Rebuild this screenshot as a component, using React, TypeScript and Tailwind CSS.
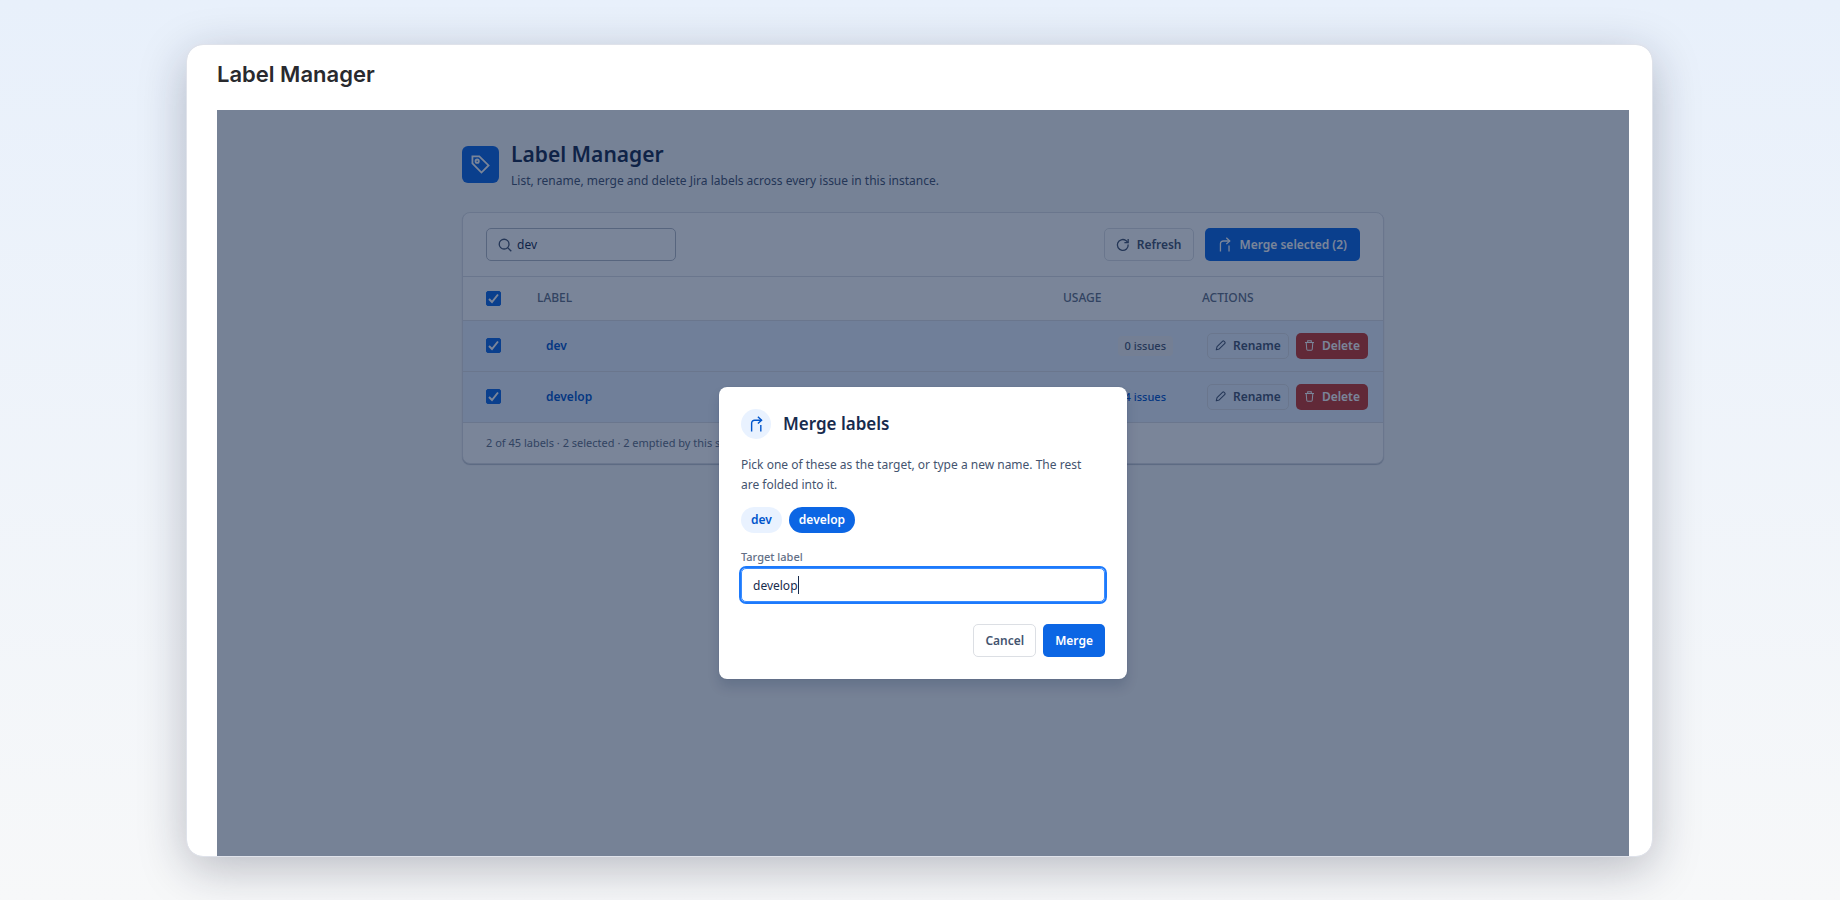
import { useEffect, useRef, useState } from 'react'
import type { ReactNode } from 'react'
import clsx from 'clsx'

interface Label {
  id: string
  name: string
  usage: number
}

const labels: Label[] = [
  { id: '1', name: 'dev', usage: 0 },
  { id: '2', name: 'develop', usage: 4 },
]

function Icon({ size = 14, className, children }: { size?: number; className?: string; children: ReactNode }) {
  return (
    <svg
      width={size}
      height={size}
      viewBox="0 0 16 16"
      fill="none"
      stroke="currentColor"
      strokeWidth="1.5"
      className={clsx('shrink-0', className)}
      aria-hidden="true"
    >
      {children}
    </svg>
  )
}

function TagIcon() {
  return (
    <Icon size={19}>
      <path d="M1.2 1.2h5.8l7.8 7.6-6 6-7.6-7.8z" />
      <circle cx="5.2" cy="5.2" r="1.4" />
    </Icon>
  )
}

function SearchIcon() {
  return (
    <Icon>
      <circle cx="7" cy="7" r="5.6" />
      <path d="m11 11 4.2 4.2" />
    </Icon>
  )
}

function RefreshIcon() {
  return (
    <Icon>
      <path d="M13.9 7.4a6.2 6.2 0 1 1-2.6-4.5L13.6 5" />
      <path d="M13.9 1v4.3H9.6" />
    </Icon>
  )
}

function MergeIcon({ size = 14 }: { size?: number }) {
  return (
    <Icon size={size} className="overflow-visible">
      <path d="M2.8 15.5V6.6A3.2 3.2 0 0 1 6 3.4h7.4" />
      <path d="M9.5-.2 13.4 3.4 9.5 7" />
      <path d="M12.6 8.5v7" />
    </Icon>
  )
}

function EditIcon() {
  return (
    <Icon size={11}>
      <path d="m1.8 14.2 1.2-4.4 8.2-8.2a1.2 1.2 0 0 1 1.7 0l1.5 1.5a1.2 1.2 0 0 1 0 1.7L6.2 13z" strokeLinejoin="round" />
    </Icon>
  )
}

function TrashIcon() {
  return (
    <Icon size={11}>
      <path d="M1.5 3.5h13M5.4 3.2v-2h5.2v2M3.2 3.8l.8 9.6c.1.9.6 1.4 1.4 1.4h5.2c.8 0 1.3-.5 1.4-1.4l.8-9.6" />
    </Icon>
  )
}

function Checkbox({ label, checked, onChange }: { label: string; checked: boolean; onChange: () => void }) {
  return (
    <span className="relative flex size-[15px]">
      <input
        type="checkbox"
        aria-label={label}
        checked={checked}
        onChange={onChange}
        className="size-full appearance-none rounded-xs border border-[#8590a2] bg-white checked:border-[#0c66e4] checked:bg-[#0c66e4]"
      />
      {checked && (
        <svg viewBox="0 0 15 15" className="pointer-events-none absolute inset-0 text-white" fill="none" stroke="currentColor" strokeWidth="2">
          <path d="m3 8 3 3 6-7.5" />
        </svg>
      )}
    </span>
  )
}

export default function App() {
  const [search, setSearch] = useState('dev')
  const [selected, setSelected] = useState<string[]>(['1', '2'])
  const [target, setTarget] = useState('develop')
  const inputRef = useRef<HTMLInputElement>(null)

  useEffect(() => {
    inputRef.current?.focus()
    inputRef.current?.setSelectionRange(target.length, target.length)
  }, [])

  const toggle = (id: string) =>
    setSelected((prev) => (prev.includes(id) ? prev.filter((x) => x !== id) : [...prev, id]))

  const toggleAll = () => setSelected(selected.length === labels.length ? [] : labels.map((l) => l.id))

  return (
    <div className="flex min-h-screen flex-col bg-linear-to-b from-[#e8f0fb] to-[#f7f8f9] pt-[45px] pr-[188px] pb-11 pl-[187px]">
      <div className="flex grow flex-col overflow-hidden rounded-[16px] bg-white pr-[23px] pl-[30px] shadow-[0_12px_48px_rgba(20,24,50,0.28)] outline outline-[#dfe2ea]">
        <h1 className="py-[14px] font-[Inter,sans-serif] text-[22px] leading-[30px] font-semibold text-[#292a2e]">
          Label Manager
        </h1>

        <div className="relative mt-[7px] flex grow flex-col bg-[#f7f8f9] font-['Noto_Sans',sans-serif] text-xs text-[#172b4d]">
          <div className="mx-auto w-full max-w-[922px] pt-[31px]">
            <header className="flex gap-3">
              <span className="mt-[5px] flex size-[37px] items-center justify-center rounded-md bg-[#0c66e4] text-white">
                <TagIcon />
              </span>
              <div>
                <h2 className="text-[21px] leading-[26px] font-semibold">Label Manager</h2>
                <p className="mt-1 leading-5 text-[#44546f]">
                  List, rename, merge and delete Jira labels across every issue in this instance.
                </p>
              </div>
            </header>

            <section className="mt-[21px] overflow-hidden rounded-lg border border-[#dcdfe4] bg-white shadow-[0_1px_1px_rgba(9,30,66,0.25)]">
              <div className="flex items-center gap-[11px] border-b border-[#dcdfe4] px-[23px] py-[15px]">
                <label className="mr-auto flex h-[33px] w-[190px] items-center gap-[5px] rounded-[5px] border border-[#b3b9c4] px-[11px] text-[#44546f]">
                  <SearchIcon />
                  <input
                    aria-label="Search labels"
                    value={search}
                    onChange={(e) => setSearch(e.target.value)}
                    className="w-full min-w-0 bg-transparent text-[#172b4d] outline-none"
                  />
                </label>
                <button className="flex h-[33px] items-center gap-[7px] rounded-[5px] border border-[#dcdfe4] px-[11px] font-semibold text-[#44546f]">
                  <RefreshIcon />
                  Refresh
                </button>
                <button className="flex h-[33px] items-center gap-2 rounded-[5px] bg-[#0c66e4] px-[13px] font-semibold text-white">
                  <MergeIcon />
                  Merge selected ({selected.length})
                </button>
              </div>

              <table className="w-full table-fixed text-left">
                <thead>
                  <tr className="h-[43px] border-b border-[#dcdfe4] text-[#626f86]">
                    <th className="w-[74px] pl-[23px]">
                      <Checkbox label="Select all" checked={selected.length === labels.length} onChange={toggleAll} />
                    </th>
                    <th className="font-medium">LABEL</th>
                    <th className="w-[139px] font-medium">USAGE</th>
                    <th className="w-[181px] font-medium">ACTIONS</th>
                  </tr>
                </thead>
                <tbody>
                  {labels.map((label) => (
                    <tr
                      key={label.id}
                      className={clsx('h-[51px] border-b border-[#dcdfe4]', selected.includes(label.id) && 'bg-[#e9f2ff]')}
                    >
                      <td className="pl-[23px]">
                        <Checkbox
                          label={`Select ${label.name}`}
                          checked={selected.includes(label.id)}
                          onChange={() => toggle(label.id)}
                        />
                      </td>
                      <td className="pl-[9px]">
                        <a href="#" className="font-semibold text-[#0055cc]">
                          {label.name}
                        </a>
                      </td>
                      <td className="pr-[29px] text-right">
                        <span
                          className={clsx(
                            'inline-block rounded px-[7px] text-[11px] leading-5 font-medium',
                            label.usage > 0 ? 'bg-[#e9f2ff] text-[#0055cc]' : 'bg-[#f1f2f4] text-[#44546f]',
                          )}
                        >
                          {label.usage} issues
                        </span>
                      </td>
                      <td>
                        <div className="flex justify-end gap-[7px] pr-[15px]">
                          <button className="flex h-[26px] items-center gap-[7px] rounded-[5px] border border-[#dcdfe4] px-[7px] font-semibold text-[#44546f]">
                            <EditIcon />
                            Rename
                          </button>
                          <button className="flex h-[26px] items-center gap-[7px] rounded-[5px] bg-[#c9372c] px-2 font-semibold text-white">
                            <TrashIcon />
                            Delete
                          </button>
                        </div>
                      </td>
                    </tr>
                  ))}
                </tbody>
              </table>

              <p className="px-[23px] py-[10px] text-[11px] leading-5 text-[#626f86]">
                2 of 45 labels · {selected.length} selected · 2 emptied by this session
              </p>
            </section>
          </div>

          <div className="absolute inset-0 flex items-start justify-center bg-[#091e42]/54 pt-[277px]">
            <div
              role="dialog"
              aria-labelledby="merge-title"
              className="w-[408px] rounded-lg bg-white p-[22px] shadow-[0_8px_12px_rgba(9,30,66,0.15),0_0_1px_rgba(9,30,66,0.31)]"
            >
              <div className="flex items-center gap-3">
                <span className="flex size-[30px] items-center justify-center rounded-full bg-[#e9f2ff] text-[#0055cc]">
                  <MergeIcon size={15} />
                </span>
                <h3 id="merge-title" className="text-[17px] leading-7 font-semibold">
                  Merge labels
                </h3>
              </div>
              <p className="mt-4 pr-4 leading-5 text-[#44546f]">
                Pick one of these as the target, or type a new name. The rest are folded into it.
              </p>
              <div className="mt-3 flex gap-[7px]">
                {labels.map((label) => (
                  <button
                    key={label.id}
                    onClick={() => setTarget(label.name)}
                    className={clsx(
                      'h-[26px] rounded-full px-[10px] font-semibold',
                      target === label.name ? 'bg-[#0c66e4] text-white' : 'bg-[#e9f2ff] text-[#0055cc]',
                    )}
                  >
                    {label.name}
                  </button>
                ))}
              </div>
              <label htmlFor="target-label" className="mt-4 block text-[11px] leading-4 font-medium text-[#626f86]">
                Target label
              </label>
              <div className="relative mt-[3px] flex items-center">
                <input
                  id="target-label"
                  ref={inputRef}
                  value={target}
                  onChange={(e) => setTarget(e.target.value)}
                  className="h-[34px] w-full rounded-[5px] border border-[#388bff] px-[11px] caret-transparent outline-2 outline-[#1d7afc]"
                />
                {/* caret */}
                <span aria-hidden="true" className="pointer-events-none absolute left-3 flex h-[18px]">
                  <span className="invisible whitespace-pre">{target}</span>
                  <span className="w-px bg-[#172b4d]" />
                </span>
              </div>
              <div className="mt-[22px] flex justify-end gap-[7px]">
                <button className="h-[33px] rounded-[5px] border border-[#dcdfe4] px-[11px] font-semibold text-[#44546f]">
                  Cancel
                </button>
                <button className="h-[33px] rounded-[5px] bg-[#0c66e4] px-3 font-semibold text-white">Merge</button>
              </div>
            </div>
          </div>
        </div>
      </div>
    </div>
  )
}
